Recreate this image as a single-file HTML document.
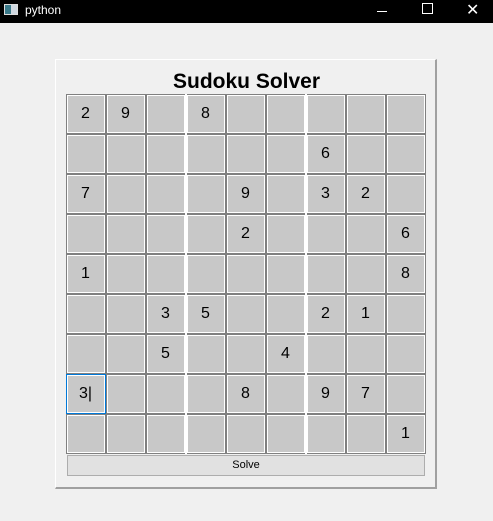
<!DOCTYPE html><html><head><style>
body{margin:0;width:493px;height:521px;background:#f0f0f0;font-family:"Liberation Sans",sans-serif;position:relative;overflow:hidden}
.tb{position:absolute;left:0;top:0;width:493px;height:23px;background:#000;color:#fff;font-size:12px}
.panel{position:absolute;left:55px;top:59px;width:382px;height:430px;border-top:1px solid #fff;border-left:1px solid #fff;border-right:2px solid #a0a0a0;border-bottom:2px solid #a0a0a0;box-sizing:border-box}
h1{position:absolute;left:0;width:493px;top:70px;margin:0;text-align:center;font-size:21px;font-weight:bold}
.g{position:absolute;left:66px;top:94px;display:grid;grid-template-columns:repeat(9,40px);grid-auto-rows:40px}
.g div{border:1px solid #808080;box-shadow:inset 0 0 0 1px #fff;background:#c8c8c8;font-size:16px;display:flex;align-items:center;justify-content:center;color:#000;padding-right:1px}
.sep{position:absolute;top:94px;width:2px;height:360px;background:#fff}
.btn{position:absolute;left:67px;top:455px;width:358px;height:21px;box-sizing:border-box;border:1px solid #adadad;background:#e1e1e1;font-size:11px;text-align:center;line-height:19px}
</style></head><body>
<div class="tb"><div style="position:absolute;left:4px;top:4px;width:14px;height:11px;background:linear-gradient(90deg,#3a7a8a 50%,#cfd8e0 50%);border:1px solid #ddd;box-sizing:border-box"></div><span style="position:absolute;left:25px;top:3px">python</span>
<div style="position:absolute;left:377px;top:11px;width:10px;height:1px;background:#fff"></div>
<div style="position:absolute;left:422px;top:3px;width:9px;height:9px;border:1px solid #fff"></div>
<span style="position:absolute;left:466px;top:0px;font-size:16px">✕</span></div>
<div class="panel"></div>
<h1>Sudoku Solver</h1>
<div class="g">
<div>2</div><div>9</div><div></div><div>8</div><div></div><div></div><div></div><div></div><div></div>
<div></div><div></div><div></div><div></div><div></div><div></div><div>6</div><div></div><div></div>
<div>7</div><div></div><div></div><div></div><div>9</div><div></div><div>3</div><div>2</div><div></div>
<div></div><div></div><div></div><div></div><div>2</div><div></div><div></div><div></div><div>6</div>
<div>1</div><div></div><div></div><div></div><div></div><div></div><div></div><div></div><div>8</div>
<div></div><div></div><div>3</div><div>5</div><div></div><div></div><div>2</div><div>1</div><div></div>
<div></div><div></div><div>5</div><div></div><div></div><div>4</div><div></div><div></div><div></div>
<div style="border-color:#0078d7">3|</div><div></div><div></div><div></div><div>8</div><div></div><div>9</div><div>7</div><div></div>
<div></div><div></div><div></div><div></div><div></div><div></div><div></div><div></div><div>1</div>
</div>
<div class="sep" style="left:185px"></div><div class="sep" style="left:305px"></div>
<div class="btn">Solve</div>
</body></html>
